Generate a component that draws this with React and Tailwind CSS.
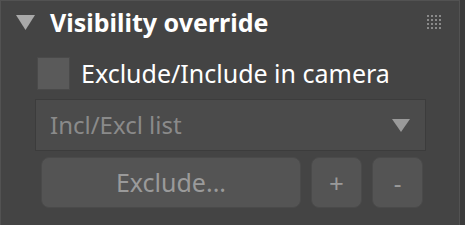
import React from "react";

const font = { fontFamily: '"Noto Sans", "Open Sans", sans-serif' };

const GripDots = () => (
  <svg width="14" height="14" viewBox="0 0 14 14">
    {[0, 4, 8, 12].map((y) =>
      [0, 4, 8, 12].map((x) => (
        <rect key={`${x}-${y}`} x={x} y={y} width="2" height="2" fill="#8a8a8a" />
      ))
    )}
  </svg>
);

const App = () => {
  return (
    <div className="w-[465px] h-[225px] bg-[#3b3b3b] flex overflow-hidden" style={font}>
      <div className="w-[460px] h-full bg-[#444444] border-l border-r border-t border-[#525252] flex flex-col">
        {/* header */}
        <div className="flex items-center h-[42px] pl-[15px] pr-[18px]">
          <svg width="19" height="15" viewBox="0 0 19 15" className="mr-[15px]">
            <polygon points="0,0 19,0 9.5,15" fill="#a9a9a9" />
          </svg>
          <span className="text-white font-bold text-[25px] leading-none flex-1">
            Visibility override
          </span>
          <GripDots />
        </div>

        {/* checkbox row */}
        <div className="flex items-center mt-[14px] pl-[36px] h-[33px]">
          <div className="w-[33px] h-[33px] bg-[#5a5a5a] border border-[#4a4a4a]" />
          <span className="ml-[11px] text-white text-[25px] leading-none">
            Exclude/Include in camera
          </span>
        </div>

        {/* dropdown */}
        <div className="mt-[9px] ml-[34px] w-[391px] h-[52px] bg-[#4b4b4b] border border-[#3c3c3c] flex items-center pl-[14px] pr-[15px]">
          <span className="flex-1 text-[#8a8a8a] text-[24px] leading-none">Incl/Excl list</span>
          <svg width="18" height="13" viewBox="0 0 18 13">
            <polygon points="0,0 18,0 9,13" fill="#9a9a9a" />
          </svg>
        </div>

        {/* buttons */}
        <div className="flex mt-[6px] ml-[40px] gap-[10px]">
          <button className="w-[260px] h-[51px] rounded-[8px] bg-[#545454] border border-[#4a4a4a] text-[#9a9a9a] text-[25px] leading-none">
            Exclude...
          </button>
          <button className="w-[51px] h-[51px] rounded-[8px] bg-[#545454] border border-[#4a4a4a] text-[#9a9a9a] text-[26px] leading-none">
            +
          </button>
          <button className="w-[51px] h-[51px] rounded-[8px] bg-[#545454] border border-[#4a4a4a] text-[#9a9a9a] text-[24px] leading-none">
            -
          </button>
        </div>
      </div>
    </div>
  );
};

export default App;
